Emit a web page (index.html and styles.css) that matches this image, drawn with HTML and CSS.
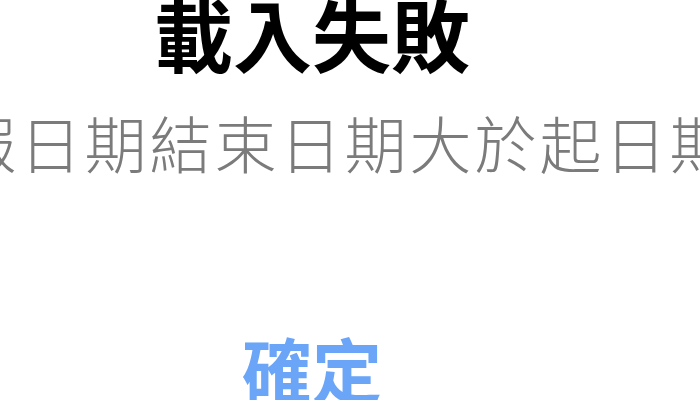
FILE: index.html
```html
<!DOCTYPE html>
<html lang="zh-Hant">
<head>
<meta charset="utf-8">
<link rel="stylesheet" href="styles.css">
</head>
<body>
<div class="dialog">
  <div class="row title"><span>載入失敗</span></div>
  <div class="row message"><span>申報日期結束日期大於起日期</span></div>
  <div class="row actions"><span class="ok">確定</span></div>
</div>
</body>
</html>
```
FILE: styles.css
```css
html, body {
  margin: 0;
  padding: 0;
  background: #ffffff;
  width: 700px;
  height: 400px;
  overflow: hidden;
}
.dialog {
  width: 624px;
  display: flex;
  flex-direction: column;
  font-family: "Noto Sans CJK TC", "Noto Sans CJK SC", sans-serif;
}
.row {
  display: flex;
  justify-content: center;
  white-space: nowrap;
}
.title {
  margin-top: -7px;
  font-size: 79px;
  line-height: 79px;
  font-weight: 700;
  color: #000000;
}
.message {
  margin-top: 39px;
  font-size: 62px;
  line-height: 62px;
  letter-spacing: 3px;
  font-weight: 300;
  color: #7b7b7b;
}
.actions {
  margin-top: 160px;
  font-size: 70px;
  line-height: 70px;
  font-weight: 700;
  color: #6aa5f8;
}
```
